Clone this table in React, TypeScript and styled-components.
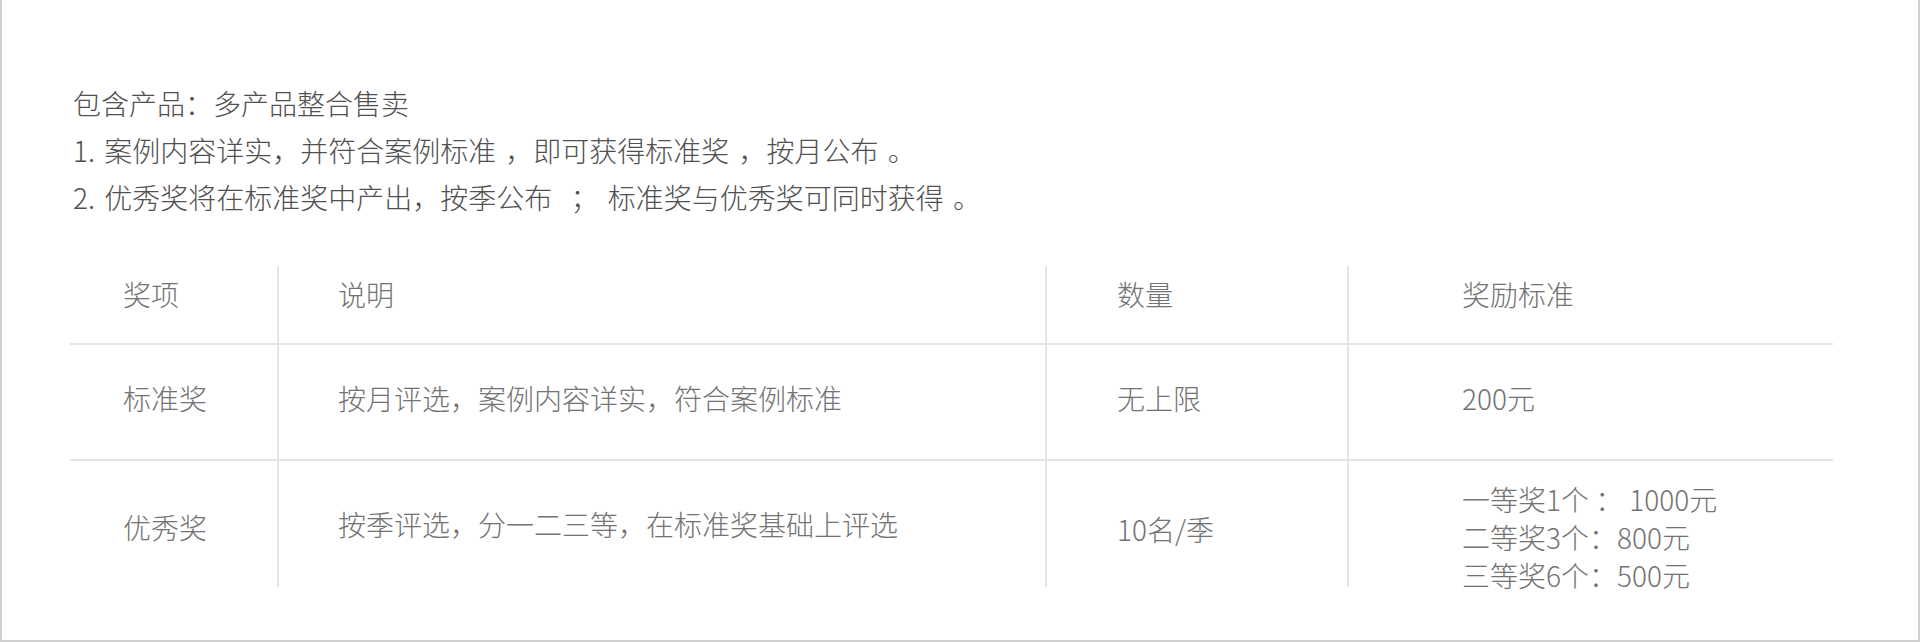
import React from "react";
import styled, { createGlobalStyle } from "styled-components";

const Global = createGlobalStyle`
  html, body { margin: 0; padding: 0; background: #fff; }
  body { font-family: "Noto Sans CJK SC", "Noto Sans", sans-serif; }
`;

const Frame = styled.div`
  box-sizing: border-box;
  width: 1920px;
  height: 642px;
  border-left: 2px solid #cfcfcf;
  border-right: 2px solid #cfcfcf;
  border-bottom: 2px solid #cfcfcf;
  padding: 80px 0 0 68px;
  background: #fff;
`;

const Intro = styled.div`
  padding-left: 3px;
  font-size: 28px;
  line-height: 47px;
  color: #505050;
  font-weight: 300;
  word-spacing: 3px;
  white-space: pre;
`;

const Grid = styled.div`
  margin-top: 45px;
  display: grid;
  grid-template-columns: 209px 768px 302px 484px;
  grid-template-rows: 79px 116px 126px;
`;

const Cell = styled.div<{ $pl: number; $last?: boolean; $lineBottom?: boolean; $head?: boolean; $shift?: number }>`
  box-sizing: border-box;
  display: flex;
  flex-direction: column;
  justify-content: ${(p) => (p.$head ? "flex-start" : "center")};
  padding-left: ${(p) => p.$pl}px;
  padding-top: ${(p) => (p.$head ? 10 : Math.max(0, p.$shift ?? 0))}px;
  padding-bottom: ${(p) => Math.max(0, -(p.$shift ?? 0))}px;
  border-right: ${(p) => (p.$last ? "none" : "2px solid #e6e6e6")};
  border-bottom: ${(p) => (p.$lineBottom ? "2px solid #e6e6e6" : "none")};
  font-size: 28px;
  line-height: 36px;
  color: #737373;
  font-weight: 300;
  white-space: pre;
`;

const RewardLine = styled.div`
  line-height: 38px;
`;

const pads = [53, 59, 70, 113];

type Row = { cells: React.ReactNode[]; head?: boolean; line?: boolean; shift?: number[] };

const rows: Row[] = [
  { head: true, line: true, cells: ["奖项", "说明", "数量", "奖励标准"] },
  { line: true, shift: [-8, -8, -8, -8], cells: ["标准奖", "按月评选，案例内容详实，符合案例标准", "无上限", "200元"] },
  {
    shift: [6, 0, 10, 26],
    cells: [
      "优秀奖",
      "按季评选，分一二三等，在标准奖基础上评选",
      "10名/季",
      <>
        <RewardLine>一等奖1个 ： 1000元</RewardLine>
        <RewardLine>二等奖3个：800元</RewardLine>
        <RewardLine>三等奖6个：500元</RewardLine>
      </>,
    ],
  },
];

export default function App() {
  return (
    <>
      <Global />
      <Frame>
        <Intro>
          {"包含产品：多产品整合售卖\n1. 案例内容详实，并符合案例标准 ，即可获得标准奖 ，按月公布 。\n2. 优秀奖将在标准奖中产出，按季公布  ； 标准奖与优秀奖可同时获得 。"}
        </Intro>
        <Grid>
          {rows.map((r, ri) =>
            r.cells.map((c, ci) => (
              <Cell
                key={`${ri}-${ci}`}
                $pl={pads[ci]}
                $last={ci === 3}
                $lineBottom={r.line}
                $head={r.head}
                $shift={r.shift ? r.shift[ci] : 0}
              >
                {c}
              </Cell>
            ))
          )}
        </Grid>
      </Frame>
    </>
  );
}
